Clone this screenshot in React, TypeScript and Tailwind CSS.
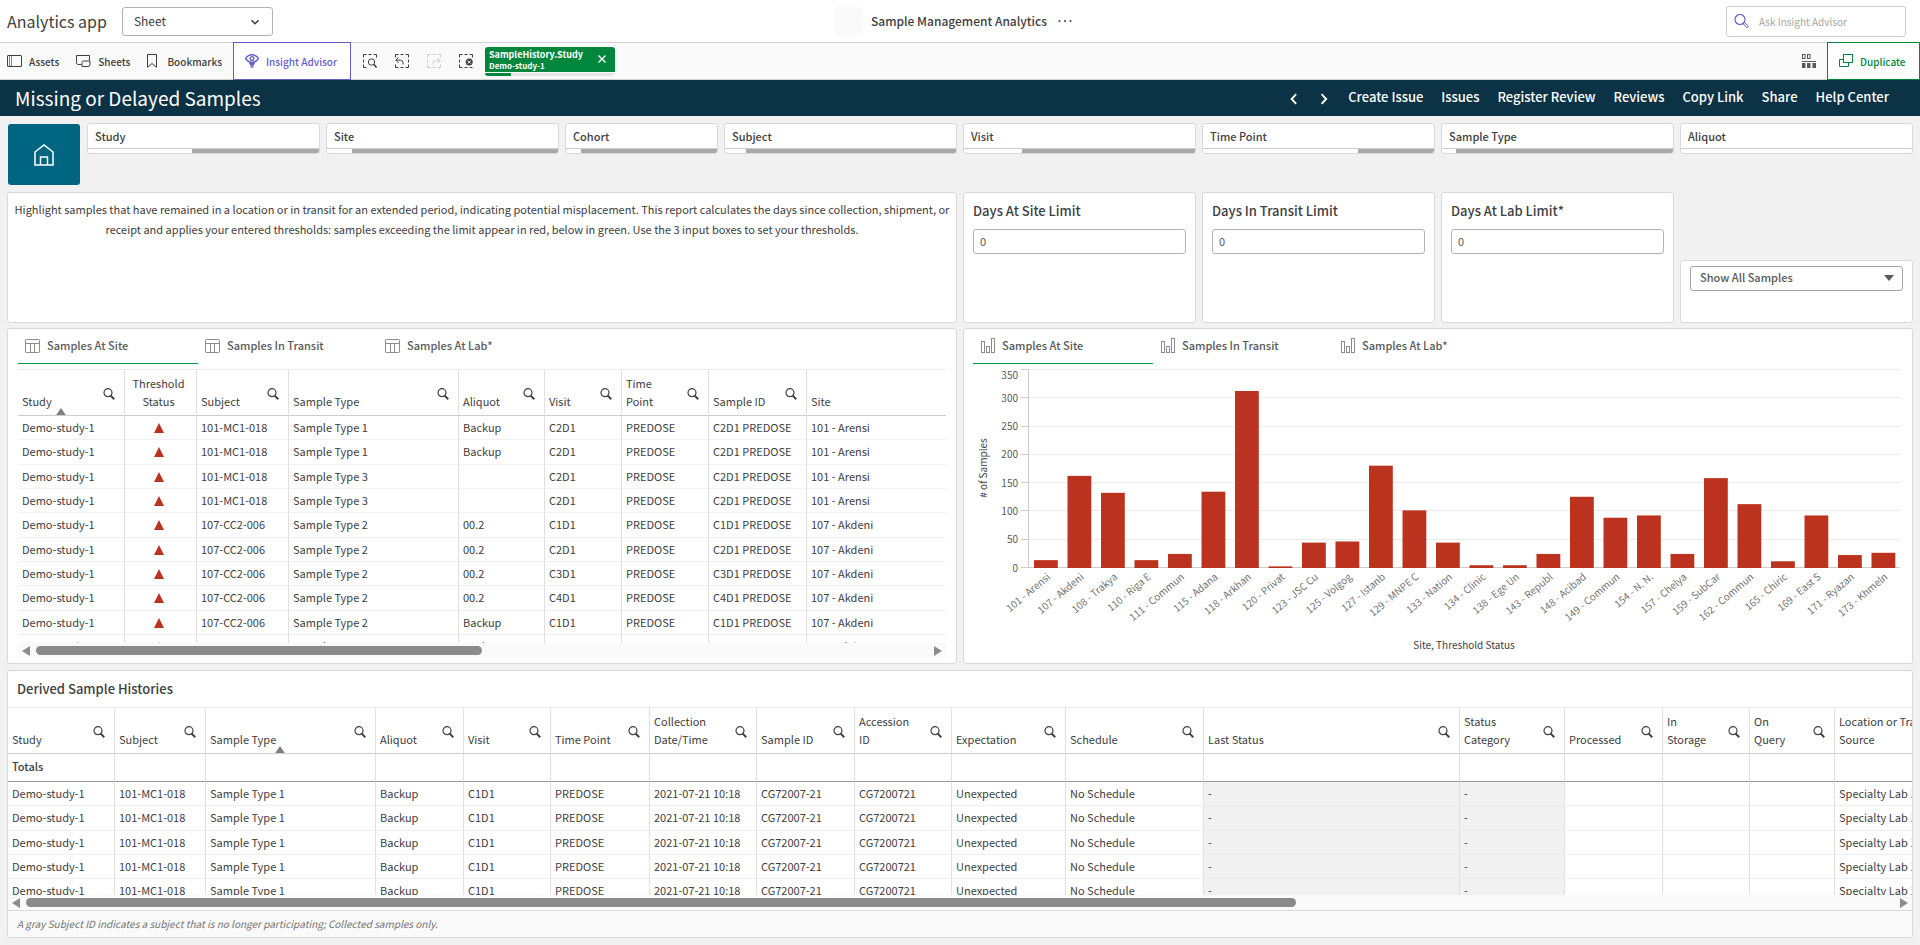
import React from "react";

/* ---------- icons ---------- */

function SearchIcon({ className = "" }: { className?: string }) {
  return (
    <svg viewBox="0 0 12 12" className={`size-3 ${className}`} fill="none" stroke="currentColor" aria-hidden="true">
      <circle cx="5" cy="4.7" r="4" strokeWidth="1.2" />
      <path d="M7.7 7.6 11.2 11.2" strokeWidth="2" />
    </svg>
  );
}

function AssetsIcon() {
  return (
    <svg viewBox="0 0 16 14" className="h-3.5 w-4" fill="none" stroke="currentColor" aria-hidden="true">
      <rect x="0.5" y="1.5" width="14" height="11" rx="0.5" />
      <path d="M4.5 1.5v11M2.5 1.5v11" strokeWidth="0.6" />
    </svg>
  );
}

function SheetsIcon() {
  return (
    <svg viewBox="0 0 16 14" className="h-3.5 w-4" fill="none" stroke="currentColor" aria-hidden="true">
      <path d="M5.500 10.500H2.200A1.700 1.700 0 0 1 .5 8.800V1.500H13.500V6.500" />
      <path d="M14 7H7.500A1.500 1.500 0 0 0 6 8.500V12.500H12A2 2 0 0 0 14 10.500Z" />
    </svg>
  );
}

function BookmarkIcon() {
  return (
    <svg viewBox="0 0 10 14" className="h-3.5 w-2.5" fill="none" stroke="currentColor" aria-hidden="true">
      <path d="M.5.5h9v12.700L5 9.500.5 13.200Z" />
    </svg>
  );
}

function InsightIcon() {
  return (
    <svg viewBox="0 0 14 14" className="size-3.5" fill="none" stroke="currentColor" aria-hidden="true">
      <path d="M.5 4.500C2.300 1.800 4.500.7 7 .7s4.700 1.100 6.500 3.800C11.700 7.200 9.800 8.500 7 8.500S2.300 7.200.5 4.500Z" strokeWidth="1.400" />
      <circle cx="7" cy="4.600" r="1.900" strokeWidth="1.300" />
      <path d="M4.500 8.500 5.500 11.300h3l1-2.800" fill="currentColor" />
      <path d="M5.500 13h3" strokeWidth="1.400" />
    </svg>
  );
}

function SmartSearchIcon() {
  return (
    <svg viewBox="0 0 14 14" className="size-3.5" fill="none" stroke="currentColor" aria-hidden="true">
      <path d="M3.500.5H.5v3M5.500.5h3M10.500.5h3v3M.5 5.500v3M.5 10.500v3h3" />
      <circle cx="8.500" cy="8" r="3.200" />
      <path d="m10.700 10.300 2.800 3.200" strokeWidth="1.600" />
    </svg>
  );
}

function StepBackIcon() {
  return (
    <svg viewBox="0 0 14 14" className="size-3.5" fill="none" stroke="currentColor" aria-hidden="true">
      <path d="M3.500.5H.5v3M5.500.5h3M10.500.5h3v3M.5 10.500v3h3M5.500 13.500h3M13.500 5.500v3M13.500 10.500v3h-3" />
      <path d="M3.500 3.500.8 6.200l2.700 2.700M1 6.200h4.500A2.500 2.500 0 0 1 8 8.700v1.800" />
    </svg>
  );
}

function StepForwardIcon() {
  return (
    <svg viewBox="0 0 14 14" className="size-3.5" fill="none" stroke="currentColor" aria-hidden="true">
      <path d="M3.500.5H.5v3M5.500.5h3M10.500.5h3v3M.5 5.500v3M.5 10.500v3h3M5.500 13.500h3M13.500 10.500v3h-3" />
      <path d="m10.500 4 2.700 2.700-2.700 2.700M13 6.700H8.500A2.500 2.500 0 0 0 6 9.200v1.300" />
    </svg>
  );
}

function ClearSelectionsIcon() {
  return (
    <svg viewBox="0 0 14 14" className="size-3.5" fill="none" stroke="currentColor" aria-hidden="true">
      <path d="M3.500.5H.5v3M5.500.5h3M10.500.5h3v3M.5 5.500v3M.5 10.500v3h3M5.500 13.500h3M10.500 13.500h3" />
      <circle cx="10.200" cy="8" r="3.500" fill="currentColor" stroke="none" />
      <path d="m8.700 6.500 3 3M11.700 6.500l-3 3" stroke="#fafafa" />
    </svg>
  );
}

function SheetNavIcon() {
  return (
    <svg viewBox="0 0 14 14" className="size-3.5" fill="none" stroke="currentColor" aria-hidden="true">
      <rect x="0.500" y="0.500" width="2.500" height="4" />
      <rect x="5.500" y="0.500" width="2.500" height="4" />
      <path d="M0 7.500h14" />
      <path d="M0 9h3.500v5H0zM5 9h3.500v5H5zM10.500 9H14v5h-3.500z" fill="currentColor" stroke="none" />
    </svg>
  );
}

function DuplicateIcon() {
  return (
    <svg viewBox="0 0 14 14" className="size-3.5" fill="none" stroke="currentColor" aria-hidden="true">
      <rect x="4.500" y="0.500" width="9" height="8" />
      <path d="M4.500 5.500h-4v7h9V8.500" />
    </svg>
  );
}

function HomeIcon() {
  return (
    <svg viewBox="0 0 20 22" className="h-[22px] w-5" fill="none" stroke="currentColor" strokeWidth="1.500" aria-hidden="true">
      <path d="M1 21V8l9-7 9 7v13Z" />
      <path d="M6.500 21v-8h7v8" />
    </svg>
  );
}

function TableIcon() {
  return (
    <svg viewBox="0 0 16 14" className="h-3.5 w-4 text-[#8c8c8c]" fill="none" stroke="currentColor" aria-hidden="true">
      <rect x="0.500" y="0.500" width="14" height="13" rx="0.800" />
      <path d="M.5 4.500h14M5.500 4.500V13M9.500 4.500V13" />
    </svg>
  );
}

function BarsIcon() {
  return (
    <svg viewBox="0 0 16 15" className="h-[15px] w-4 text-[#8c8c8c]" fill="none" stroke="currentColor" aria-hidden="true">
      <rect x="1.500" y="3.500" width="3" height="11" />
      <rect x="6.500" y="8.500" width="3" height="6" />
      <rect x="11.500" y="0.500" width="3" height="14" />
    </svg>
  );
}

function Chevron({ d, className }: { d: string; className: string }) {
  return (
    <svg viewBox="0 0 10 10" className={className} fill="none" stroke="currentColor" strokeWidth="1.600" aria-hidden="true">
      <path d={d} />
    </svg>
  );
}

/* ---------- top bars ---------- */

function Header() {
  return (
    <header className="grid h-[42px] grid-cols-[1fr_auto_1fr] items-center bg-white">
      <div className="flex items-center gap-[15px] pl-[7px]">
        <span className="text-base leading-6 text-[#404040]">Analytics app</span>
        <div className="relative">
          <select
            aria-label="View"
            className="block h-[29px] w-[151px] appearance-none rounded-[3px] border border-[#b3b3b3] bg-white pl-[11px] text-xs text-[#404040]"
          >
            <option>Sheet</option>
          </select>
          <Chevron d="M1.500 3.300 5 6.700l3.500-3.400" className="pointer-events-none absolute right-[13px] top-[10px] size-[10px] text-[#404040]" />
        </div>
      </div>
      <div className="flex items-center">
        <div className="h-[29px] w-7 rounded-[3px] bg-[#fafafa]" />
        <h1 className="ml-2 pb-px text-xs font-medium text-[#404040]">Sample Management Analytics</h1>
        <button aria-label="More" className="ml-[10px] mr-3 flex w-4 items-center justify-center text-[#404040]">
          <svg viewBox="0 0 14 4" className="h-1 w-3.5" fill="currentColor" aria-hidden="true">
            <circle cx="1.500" cy="2" r="1" />
            <circle cx="7" cy="2" r="1" />
            <circle cx="12.500" cy="2" r="1" />
          </svg>
        </button>
      </div>
      <div className="flex justify-end pr-[14px]">
        <label className="flex h-[31px] w-[180px] items-center gap-[10px] rounded-[3px] border border-[#cccccc] bg-white pl-[7px]">
          <svg viewBox="0 0 15 15" className="size-[15px] shrink-0 text-[#655dc6]" fill="none" stroke="currentColor" aria-hidden="true">
            <circle cx="6" cy="5.500" r="5" strokeWidth="1.200" />
            <path d="m9.200 9.800 1.300-1.300 3.800 3.800-1.300 1.500Z" />
          </svg>
          <input aria-label="Ask Insight Advisor" placeholder="Ask Insight Advisor" className="w-full min-w-0 text-[10px] outline-none placeholder:text-[#a6a6a6]" />
        </label>
      </div>
    </header>
  );
}

function Toolbar() {
  return (
    <div className="flex h-[38px] items-stretch justify-between border-y border-[#d2d2d2] bg-[#fafafa] text-[10px] font-medium text-[#404040]">
      <div className="flex items-stretch">
        <div className="flex items-center gap-[17px] pl-[7px] pr-[11px]">
          <button className="flex items-center gap-[6px]"><AssetsIcon />Assets</button>
          <button className="flex items-center gap-[6px]"><SheetsIcon />Sheets</button>
          <button className="flex items-center gap-[10px]"><BookmarkIcon />Bookmarks</button>
        </div>
        <button className="-my-px flex w-[118px] items-center gap-[7px] border border-[#655dc6] bg-white pl-[11px] text-[#655dc6]">
          <InsightIcon />Insight Advisor
        </button>
        <div className="flex items-center gap-[18px] px-3">
          <button aria-label="Selections tool"><SmartSearchIcon /></button>
          <button aria-label="Step back"><StepBackIcon /></button>
          <button aria-label="Step forward" className="text-[#cfcfcf]" disabled><StepForwardIcon /></button>
          <button aria-label="Clear all selections"><ClearSelectionsIcon /></button>
        </div>
        <div className="flex w-[130px] flex-col self-center overflow-hidden rounded-[3px]">
          <div className="flex h-[25px] items-center justify-between bg-[#00873d] pl-1 pr-2 text-white">
            <div className="flex flex-col">
              <span className="text-[9px] font-bold leading-3">SampleHistory.Study</span>
              <span className="text-[8px] font-bold leading-[9px]">Demo-study-1</span>
            </div>
            <button aria-label="Clear selection">
              <svg viewBox="0 0 10 10" className="size-[10px]" stroke="currentColor" strokeWidth="1.400" aria-hidden="true">
                <path d="m1.500 1.500 7 7M8.500 1.500l-7 7" />
              </svg>
            </button>
          </div>
          <div className="mt-px h-[3px] bg-[#e6e6e6]">
            <div className="h-full w-1/5 bg-[#00873d]" />
          </div>
        </div>
      </div>
      <div className="flex items-stretch gap-[11px]">
        <button aria-label="Sheet navigation" className="text-[#595959]"><SheetNavIcon /></button>
        <button className="-my-px flex w-[93px] items-center gap-[7px] border border-[#00873d] bg-white pl-[11px] text-[#00873d]">
          <DuplicateIcon />Duplicate
        </button>
      </div>
    </div>
  );
}

const NAV_LINKS = ["Create Issue", "Issues", "Register Review", "Reviews", "Copy Link", "Share", "Help Center"];

function TitleBar() {
  return (
    <div className="flex h-9 items-center justify-between bg-[#0c3246] pl-[15px] pr-[31px] text-white">
      <h2 className="pb-px text-[19px] leading-7">Missing or Delayed Samples</h2>
      <nav className="flex items-center gap-[18px] text-[13px] font-medium leading-5">
        <button aria-label="Previous sheet" className="pt-0.5"><Chevron d="M6.800 1 3 5l3.800 4" className="size-3" /></button>
        <button aria-label="Next sheet" className="pt-0.5"><Chevron d="M3 1l3.800 4L3 9" className="size-3" /></button>
        {NAV_LINKS.map((label) => (
          <a key={label} href="#" className="pb-[3px]">{label}</a>
        ))}
      </nav>
    </div>
  );
}

/* ---------- filters ---------- */

const FILTERS: [string, number][] = [
  ["Study", 45],
  ["Site", 11],
  ["Cohort", 10],
  ["Subject", 9],
  ["Visit", 25],
  ["Time Point", 67],
  ["Sample Type", 6],
  ["Aliquot", 100],
];

const CARD = "rounded-[3px] border border-[#d9d9d9] bg-white";

function FilterRow() {
  return (
    <div className="grid grid-cols-[74fr_233fr_233fr_153fr_233fr_233fr_233fr_233fr_233fr] items-start gap-[6px]">
      <button aria-label="Home" className="mx-px mt-px flex h-[61px] items-center justify-center rounded-[3px] bg-[#006580] text-white">
        <HomeIcon />
      </button>
      {FILTERS.map(([name, open]) => (
        <button key={name} className={`${CARD} flex h-[31px] flex-col overflow-hidden text-left`}>
          <span className="block h-6 px-[7px] text-[11px] font-medium leading-[25px] text-[#404040]">{name}</span>
          <span className="flex h-[5px] w-full justify-end border-t border-[#cccccc]">
            <span className="bg-[#a9a9a9]" style={{ width: `${100 - open}%` }} />
          </span>
        </button>
      ))}
    </div>
  );
}

function LimitCard({ label, id }: { label: string; id: string }) {
  return (
    <div className={`${CARD} px-[9px] pt-2`}>
      <label htmlFor={id} className="block text-[13px] font-medium leading-5 text-[#404040]">{label}</label>
      <input
        id={id}
        defaultValue="0"
        className="mt-2 block h-[25px] w-full rounded-[3px] border border-[#b3b3b3] px-[6px] pb-0.5 text-[11px] text-[#595959]"
      />
    </div>
  );
}

function ThresholdRow() {
  return (
    <div className="mt-[7px] grid h-[131px] grid-cols-[950fr_233fr_233fr_233fr_233fr] gap-[6px]">
      <section className={`${CARD} pt-[6px] text-center text-[11px] leading-5 text-[#404040]`}>
        Highlight samples that have remained in a location or in transit for an extended period, indicating potential
        misplacement. This report calculates the days since collection, shipment, or receipt and applies your entered
        thresholds: samples exceeding the limit appear in red, below in green. Use the 3 input boxes to set your thresholds.
      </section>
      <LimitCard id="site-limit" label="Days At Site Limit" />
      <LimitCard id="transit-limit" label="Days In Transit Limit" />
      <LimitCard id="lab-limit" label="Days At Lab Limit*" />
      <div className={`${CARD} h-[63px] self-end px-[9px] pt-[5px]`}>
        <div className="relative">
          <select
            aria-label="Sample filter"
            className="block h-[25px] w-full appearance-none rounded-[3px] border border-[#a6a6a6] bg-white pb-0.5 pl-[9px] text-[11px] font-medium text-[#595959]"
          >
            <option>Show All Samples</option>
          </select>
          <svg viewBox="0 0 10 6" className="pointer-events-none absolute right-[9px] top-[9px] h-1.5 w-2.5" fill="#595959" aria-hidden="true">
            <path d="M0 0h10L5 6Z" />
          </svg>
        </div>
      </div>
    </div>
  );
}

/* ---------- tabs and tables ---------- */

function Tabs({ icon }: { icon: React.ReactNode }) {
  return (
    <div role="tablist" className="flex h-[35px]">
      {["Samples At Site", "Samples In Transit", "Samples At Lab*"].map((label, i) => (
        <button
          key={label}
          role="tab"
          aria-selected={i === 0}
          className={`flex w-[180px] items-center gap-[6px] border-b pb-px pl-[7px] text-[11px] font-medium text-[#595959] ${
            i === 0 ? "border-[#009845]" : "border-transparent"
          }`}
        >
          {icon}
          {label}
        </button>
      ))}
    </div>
  );
}

type Column = { name: string; width?: number; search?: boolean; sorted?: boolean; center?: boolean };

function HeadCell({ col }: { col: Column }) {
  return (
    <th
      scope="col"
      className="h-[47px] border-b border-r border-t border-b-[#cccccc] border-r-[#e0e0e0] border-t-[#ebebeb] p-0 font-normal last:border-r-0"
    >
      <div className="flex h-[45px] items-stretch">
        <div className={`relative flex flex-1 flex-col justify-end whitespace-pre pb-[5px] leading-[18px] ${col.center ? "pr-1 text-center" : "pl-1 text-left"}`}>
          {col.name}
          {col.sorted && (
            <svg viewBox="0 0 10 7" className="absolute bottom-0 left-1/2 h-[7px] w-2.5 -translate-x-1/2" fill="#808080" aria-hidden="true">
              <path d="M5 0 9.800 7H.2Z" />
            </svg>
          )}
        </div>
        {col.search && (
          <button aria-label={`Search ${col.name.replace("\n", " ")}`} className="mr-[9px] pt-0.5 text-[#404040]">
            <SearchIcon />
          </button>
        )}
      </div>
    </th>
  );
}

function ColGroup({ cols }: { cols: Column[] }) {
  return (
    <colgroup>
      {cols.map((c) => (
        <col key={c.name} style={c.width ? { width: c.width } : undefined} />
      ))}
    </colgroup>
  );
}

function ScrollBar({ size }: { size: string }) {
  return (
    <div className="flex h-[15px] items-center gap-[6px] bg-[#fafafa] px-1">
      <button aria-label="Scroll left">
        <svg viewBox="0 0 8 10" className="h-2.5 w-2" fill="#8c8c8c" aria-hidden="true"><path d="M8 0v10L0 5Z" /></svg>
      </button>
      <div className="flex-1">
        <div className={`h-[9px] rounded-full bg-[#8a8a8a] ${size}`} />
      </div>
      <button aria-label="Scroll right">
        <svg viewBox="0 0 8 10" className="h-2.5 w-2" fill="#8c8c8c" aria-hidden="true"><path d="M0 0v10l8-5Z" /></svg>
      </button>
    </div>
  );
}

const SITE_COLS: Column[] = [
  { name: "Study", width: 107, search: true, sorted: true },
  { name: "Threshold\nStatus", width: 72, center: true },
  { name: "Subject", width: 92, search: true },
  { name: "Sample Type", width: 170, search: true },
  { name: "Aliquot", width: 86, search: true },
  { name: "Visit", width: 77, search: true },
  { name: "Time\nPoint", width: 87, search: true },
  { name: "Sample ID", width: 98, search: true },
  { name: "Site" },
];

const SITE_ROWS: [string, string, string, string, string][] = [
  ["101-MC1-018", "Sample Type 1", "Backup", "C2D1", "101 - Arensi"],
  ["101-MC1-018", "Sample Type 1", "Backup", "C2D1", "101 - Arensi"],
  ["101-MC1-018", "Sample Type 3", "", "C2D1", "101 - Arensi"],
  ["101-MC1-018", "Sample Type 3", "", "C2D1", "101 - Arensi"],
  ["107-CC2-006", "Sample Type 2", "00.2", "C1D1", "107 - Akdeni"],
  ["107-CC2-006", "Sample Type 2", "00.2", "C2D1", "107 - Akdeni"],
  ["107-CC2-006", "Sample Type 2", "00.2", "C3D1", "107 - Akdeni"],
  ["107-CC2-006", "Sample Type 2", "00.2", "C4D1", "107 - Akdeni"],
  ["107-CC2-006", "Sample Type 2", "Backup", "C1D1", "107 - Akdeni"],
  ["107-CC2-006", "Sample Type 2", "Backup", "C2D1", "107 - Akdeni"],
];

const CELL = "overflow-hidden whitespace-nowrap border-b border-r border-b-[#efefef] border-r-[#e0e0e0] pb-0.5 pl-1 pr-0 pt-0 last:border-r-0";
const ROW = "h-6 nth-[3n+2]:h-[25px]";

function SamplesTable() {
  return (
    <section className={`${CARD} px-[10px] pb-[5px]`}>
      <Tabs icon={<TableIcon />} />
      <div className="mt-[5px] h-[274px] overflow-hidden">
        <table className="w-full table-fixed border-separate border-spacing-0 text-[11px] leading-[18px] text-[#404040]">
          <ColGroup cols={SITE_COLS} />
          <thead>
            <tr>{SITE_COLS.map((c) => <HeadCell key={c.name} col={c} />)}</tr>
          </thead>
          <tbody>
            {SITE_ROWS.map(([subject, type, aliquot, visit, site], i) => (
              <tr key={i} className={ROW}>
                <td className={CELL}>Demo-study-1</td>
                <td className={CELL}>
                  <svg viewBox="0 0 10 10" role="img" aria-label="Over threshold" className="ml-[25px] mt-0.5 size-[10px]" fill="#bb331f">
                    <path d="M5 0 10 10H0Z" />
                  </svg>
                </td>
                <td className={CELL}>{subject}</td>
                <td className={CELL}>{type}</td>
                <td className={CELL}>{aliquot}</td>
                <td className={CELL}>{visit}</td>
                <td className={CELL}>PREDOSE</td>
                <td className={CELL}>{visit} PREDOSE</td>
                <td className={CELL}>{site}</td>
              </tr>
            ))}
          </tbody>
        </table>
      </div>
      <ScrollBar size="w-1/2" />
    </section>
  );
}

/* ---------- chart ---------- */

const BARS: [string, number][] = [
  ["101 - Arensi", 13], ["107 - Akdeni", 162], ["108 - Trakya", 132], ["110 - Riga E", 13], ["111 - Commun", 24],
  ["115 - Adana", 134], ["118 - Arkhan", 312], ["120 - Privat", 2], ["123 - JSC Cu", 44], ["125 - Volgog", 46],
  ["127 - Istanb", 180], ["129 - MNPE C", 101], ["133 - Nation", 44], ["134 - Clinic", 4], ["138 - Ege Un", 4],
  ["143 - Republ", 24], ["148 - Acibad", 125], ["149 - Commun", 88], ["154 - N. N.", 92], ["157 - Chelya", 24],
  ["159 - SubCar", 158], ["162 - Commun", 112], ["165 - Chiric", 11], ["169 - East S", 92], ["171 - Ryazan", 22],
  ["173 - Khmeln", 26],
];

const PLOT = { left: 65, right: 936, top: 5.5, bottom: 203.5 };
const yOf = (v: number) => PLOT.bottom - ((PLOT.bottom - PLOT.top) * v) / 350;

function SamplesChart() {
  const step = (PLOT.right - PLOT.left) / BARS.length;
  return (
    <section className={`${CARD} overflow-hidden`}>
      <div className="pl-[9px]">
        <Tabs icon={<BarsIcon />} />
      </div>
      <svg viewBox="0 0 948 298" className="block w-full" role="img" aria-label="Number of samples by site">
        {[0, 50, 100, 150, 200, 250, 300, 350].map((v) => {
          const y = Math.floor(yOf(v)) + 0.5;
          return (
            <g key={v}>
              <line x1={PLOT.left} x2={PLOT.right} y1={y} y2={y} stroke={v === 0 ? "#cccccc" : "#ebebeb"} />
              <line x1={PLOT.left - 8} x2={PLOT.left} y1={y} y2={y} stroke="#cccccc" />
              <text x={PLOT.left - 11} y={v === 350 ? 15 : yOf(v) + 4} textAnchor="end" className="fill-[#595959] text-[10px]">{v}</text>
            </g>
          );
        })}
        <line x1={64.5} x2={64.5} y1={PLOT.top} y2={PLOT.bottom} stroke="#cccccc" />
        {BARS.map(([name, value], i) => {
          const x = PLOT.left + i * step + 5;
          return (
            <g key={name}>
              <rect x={x} y={yOf(value)} width={23.8} height={PLOT.bottom + 0.5 - yOf(value)} fill="#bb331f" />
              <text transform={`translate(${x + 17} 214) rotate(-40)`} textAnchor="end" className="fill-[#737373] text-[10px]">
                {name}
              </text>
            </g>
          );
        })}
        <text transform="translate(23 104) rotate(-90)" textAnchor="middle" className="fill-[#404040] text-[10px]"># of Samples</text>
        <text x="500" y="285" textAnchor="middle" className="fill-[#404040] text-[10px]">Site, Threshold Status</text>
      </svg>
    </section>
  );
}

/* ---------- histories ---------- */

const HISTORY_COLS: Column[] = [
  { name: "Study", width: 107, search: true },
  { name: "Subject", width: 91, search: true },
  { name: "Sample Type", width: 170, search: true, sorted: true },
  { name: "Aliquot", width: 88, search: true },
  { name: "Visit", width: 87, search: true },
  { name: "Time Point", width: 99, search: true },
  { name: "Collection\nDate/Time", width: 107, search: true },
  { name: "Sample ID", width: 98, search: true },
  { name: "Accession\nID", width: 97, search: true },
  { name: "Expectation", width: 114, search: true },
  { name: "Schedule", width: 138, search: true },
  { name: "Last Status", width: 256, search: true },
  { name: "Status\nCategory", width: 105, search: true },
  { name: "Processed", width: 98, search: true },
  { name: "In\nStorage", width: 87, search: true },
  { name: "On\nQuery", width: 85, search: true },
  { name: "Location or Transit\nSource", width: 180, search: true },
];

const HISTORY_ROW = [
  "Demo-study-1", "101-MC1-018", "Sample Type 1", "Backup", "C1D1", "PREDOSE", "2021-07-21 10:18", "CG72007-21",
  "CG7200721", "Unexpected", "No Schedule", "-", "-", "", "", "", "Specialty Lab 1",
];

function HistoriesTable() {
  return (
    <section className={`${CARD} mt-[6px] overflow-hidden`}>
      <h3 className="h-9 px-[9px] text-[13px] font-medium leading-9 text-[#404040]">Derived Sample Histories</h3>
      <div className="h-[188px] overflow-hidden">
        <table className="w-[2007px] table-fixed border-separate border-spacing-0 text-[11px] leading-[18px] text-[#404040]">
          <ColGroup cols={HISTORY_COLS} />
          <thead>
            <tr>{HISTORY_COLS.map((c) => <HeadCell key={c.name} col={c} />)}</tr>
            <tr className="h-7">
              {HISTORY_COLS.map((c, i) => (
                <th key={c.name} className="border-b border-r border-b-[#999999] border-r-[#e0e0e0] pb-1 pl-1 pr-0 pt-0 text-left font-medium">
                  {i === 0 ? "Totals" : ""}
                </th>
              ))}
            </tr>
          </thead>
          <tbody>
            {[0, 1, 2, 3, 4].map((r) => (
              <tr key={r} className={ROW}>
                {HISTORY_ROW.map((text, i) => (
                  <td key={i} className={`${CELL} ${text === "-" ? "bg-[#f1f1f1]" : ""}`}>{text}</td>
                ))}
              </tr>
            ))}
          </tbody>
        </table>
      </div>
      <ScrollBar size="w-[68%]" />
      <p className="h-[27px] border-t border-[#d9d9d9] bg-[#fafafa] px-[9px] text-[10px] italic leading-[25px] text-[#737373]">
        A gray Subject ID indicates a subject that is no longer participating; Collected samples only.
      </p>
    </section>
  );
}

export default function App() {
  return (
    <div className="min-h-screen bg-[#f1f1f1] font-['Noto_Sans_CJK_SC','Noto_Sans',sans-serif]">
      <Header />
      <Toolbar />
      <TitleBar />
      <main className="px-[7px] pb-[7px] pt-[7px]">
        <FilterRow />
        <ThresholdRow />
        <div className="mt-[5px] grid grid-cols-2 gap-[6px]">
          <SamplesTable />
          <SamplesChart />
        </div>
        <HistoriesTable />
      </main>
    </div>
  );
}
